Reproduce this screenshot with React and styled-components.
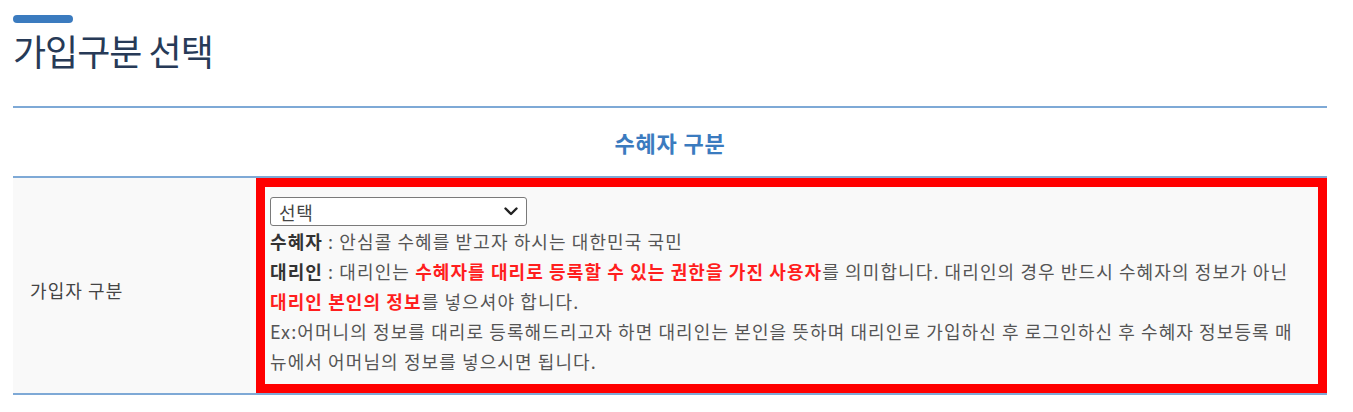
import React from 'react'
import styled, { createGlobalStyle } from 'styled-components'

const GlobalStyle = createGlobalStyle`
  * { box-sizing: border-box; }
  body {
    margin: 0;
    background: #fff;
    font-family: "Noto Sans CJK KR", "Noto Sans", sans-serif;
  }
`

const Page = styled.div`
  width: 1314px;
  margin-left: 13px;
  padding-top: 15px;
`

const TitleBar = styled.div`
  width: 60px;
  height: 8px;
  border-radius: 4px;
  background: #3b7bbf;
`

const Title = styled.h2`
  margin: 0;
  height: 83px;
  padding-top: 4px;
  font-size: 36px;
  line-height: 46px;
  font-weight: 400;
  letter-spacing: -1px;
  color: #273a57;
`

const Table = styled.div`
  border-top: 2px solid #7ea9d6;
  border-bottom: 2px solid #7ea9d6;
`

const HeadRow = styled.div`
  height: 70px;
  display: flex;
  align-items: center;
  justify-content: center;
  border-bottom: 2px solid #7ea9d6;
  font-size: 22px;
  font-weight: 700;
  color: #3b7bbf;
  letter-spacing: 0.8px;
`

const Row = styled.div`
  display: grid;
  grid-template-columns: 243px 1fr;
  background: #f9f9f9;
`

const Label = styled.div`
  display: flex;
  align-items: center;
  padding: 8px 0 0 17px;
  font-size: 18px;
  letter-spacing: 1.1px;
  color: #444;
`

const Highlight = styled.div`
  border: 9px solid #ff0000;
  padding: 10px 8px 8px 5px;
`

const SelectWrap = styled.div`
  position: relative;
  width: 257px;
  height: 29px;
`

const Select = styled.select`
  appearance: none;
  width: 100%;
  height: 100%;
  border: 1px solid #7a7a7a;
  border-radius: 3px;
  background: #fff;
  padding: 0 0 0 8px;
  font-family: inherit;
  font-size: 18px;
  letter-spacing: 0.8px;
  color: #444;
`

const Chevron = styled.svg`
  position: absolute;
  right: 9px;
  top: 10px;
  pointer-events: none;
`

const Desc = styled.div`
  font-size: 18px;
  line-height: 30px;
  letter-spacing: 1.1px;
  color: #555;
`

const Term = styled.b`
  color: #333;
  font-weight: 700;
`

const Red = styled.b`
  color: #ff1e1e;
  font-weight: 700;
`

const App = () => {
  return (
    <>
      <GlobalStyle />
      <Page>
        <TitleBar />
        <Title>가입구분 선택</Title>
        <Table>
          <HeadRow>수혜자 구분</HeadRow>
          <Row>
            <Label>가입자 구분</Label>
            <Highlight>
              <SelectWrap>
                <Select defaultValue=''>
                  <option value=''>선택</option>
                  <option value='1'>수혜자</option>
                  <option value='2'>대리인</option>
                </Select>
                <Chevron width='14' height='9' viewBox='0 0 14 9'>
                  <path d='M1.5 1.5 L7 7 L12.5 1.5' fill='none' stroke='#222' strokeWidth='2.4' strokeLinecap='round' strokeLinejoin='round' />
                </Chevron>
              </SelectWrap>
              <Desc>
                <Term>수혜자</Term> : 안심콜 수혜를 받고자 하시는 대한민국 국민
                <br />
                <Term>대리인</Term> : 대리인는 <Red>수혜자를 대리로 등록할 수 있는 권한을 가진 사용자</Red>를 의미합니다. 대리인의 경우 반드시 수혜자의 정보가 아닌
                <br />
                <Red>대리인 본인의 정보</Red>를 넣으셔야 합니다.
                <br />
                Ex:어머니의 정보를 대리로 등록해드리고자 하면 대리인는 본인을 뜻하며 대리인로 가입하신 후 로그인하신 후 수혜자 정보등록 매
                <br />
                뉴에서 어머님의 정보를 넣으시면 됩니다.
              </Desc>
            </Highlight>
          </Row>
        </Table>
      </Page>
    </>
  )
}

export default App
